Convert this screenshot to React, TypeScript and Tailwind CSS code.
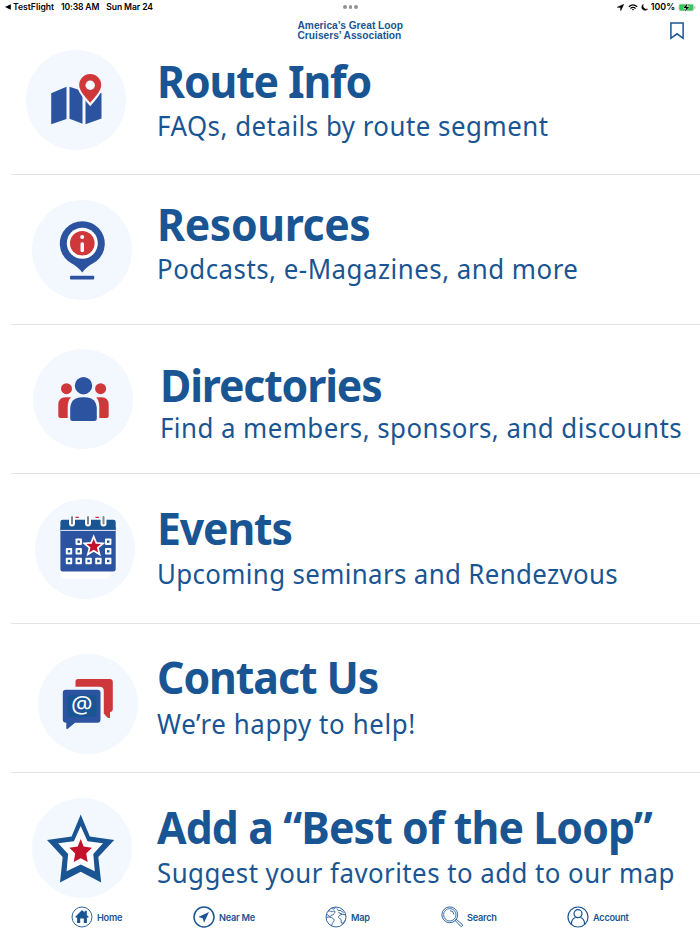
import type { ReactNode } from "react";

const BLUE = "#2c539f";
const NAVY = "#1a5593";
const RED = "#cf383b";
const CRIMSON = "#c4122d";

function RouteIcon() {
  return (
    <svg viewBox="0 0 100 100" className="size-full">
      <g fill={BLUE}>
        <path d="M25.2 43.3 40.5 36.7V69L25.2 74.3Z" />
        <path d="M43.5 36.7 56.5 41V73.7L43.5 68.7Z" />
        <path d="M59.5 42 75.5 43V68.5L59.5 74.3Z" />
      </g>
      <path
        d="M64.2 52.7C61 49 53.2 41.5 53.2 35.1a11 11 0 0 1 22 0C75.2 41.5 67.400 49 64.2 52.700Z"
        fill={RED}
        stroke="#f3f8ff"
        strokeWidth="4.500"
        paintOrder="stroke"
      />
      <circle cx="64.2" cy="35.300" r="4.700" fill="#f8fbff" />
    </svg>
  );
}

function ResourcesIcon() {
  return (
    <svg viewBox="0 0 100 100" className="size-full">
      <path d="M50.3 72.500C46 66.500 41 64.500 36 61a22.500 22.500 0 1 1 28.600 0C59.500 64.500 54.500 66.500 50.300 72.500Z" fill={BLUE} />
      <circle cx="50.300" cy="43.200" r="15.500" fill="#fff" />
      <circle cx="50.300" cy="43.200" r="12.300" fill={RED} />
      <circle cx="50.200" cy="36.900" r="2" fill="#fff" />
      <rect x="48.500" y="42.200" width="3.500" height="10" rx="1.600" fill="#fff" />
      <rect x="38" y="75.700" width="24.200" height="3.700" rx="1" fill={BLUE} />
    </svg>
  );
}

function DirectoriesIcon() {
  return (
    <svg viewBox="0 0 100 100" className="size-full">
      <g fill={RED}>
        <circle cx="33.500" cy="39.700" r="5.500" />
        <circle cx="67.600" cy="39.700" r="5.500" />
        <path d="M38 48.200H32.500Q25.300 48.200 25.300 56V67Q25.300 69 27.300 69H34.700V58Q34.700 51.500 38 48.200Z" />
        <path d="M63.200 48.200H68.500Q75.700 48.200 75.700 56V67Q75.700 69 73.700 69H66.300V58Q66.300 51.500 63.200 48.200Z" />
      </g>
      <circle cx="50.500" cy="36.700" r="8.700" fill={BLUE} />
      <path d="M37.200 60.500Q37.200 48.300 49.500 48.300H51.500Q63.800 48.300 63.800 60.500V69.700Q63.800 72 61.500 72H39.500Q37.200 72 37.200 69.700Z" fill={BLUE} />
    </svg>
  );
}

const days: [number, number][] = [
  [43.700, 42.700], [73.200, 42.700],
  [34, 52.300], [43.700, 52.300], [73.200, 52.300],
  [34, 62], [43.700, 62], [53.600, 62], [63.400, 62], [73.200, 62],
];

function EventsIcon() {
  return (
    <svg viewBox="0 0 100 100" className="size-full">
      <path d="M25.400 65H81V73H75.500Q74.500 79.700 70 79.700H28Q25.400 79.700 25.400 76Z" fill="#fff" />
      <rect x="25.400" y="27" width="55.300" height="45.400" rx="2.500" fill={BLUE} />
      <path d="M25.400 30.700V23Q25.400 20.700 27.700 20.700H78.400Q80.700 20.700 80.700 23V30.700Z" fill={NAVY} />
      <path d="M25.400 31.400H80.700" stroke="#fff" strokeWidth="0.900" />
      <path d="M40.500 18.300h3.300M60.500 18.300h3.300" stroke="#d0253b" strokeWidth="1.200" />
      {[37, 53, 68.500].map((x) => (
        <g key={x}>
          <rect x={x - 3} y="16.700" width="6" height="10.700" rx="3" fill="#fff" />
          <rect x={x - 1} y="17" width="2" height="8.500" rx="1" fill="#7c8794" />
        </g>
      ))}
      {days.map(([x, y]) => (
        <g key={`${x}-${y}`}>
          <rect x={x - 3.200} y={y - 3.200} width="6.400" height="6.400" rx="0.800" fill="#fff" />
          <rect x={x - 1.200} y={y - 1.200} width="2.400" height="2.400" fill={NAVY} />
        </g>
      ))}
      <path
        d="M58.700 39.800 60.700 44.700 66 45.100 61.900 48.500 63.200 53.600 58.700 50.800 54.200 53.600 55.500 48.500 51.400 45.100 56.700 44.700Z"
        fill={CRIMSON}
        stroke="#fff"
        strokeWidth="3.400"
        paintOrder="stroke"
      />
    </svg>
  );
}

function ContactIcon() {
  return (
    <svg viewBox="0 0 100 100" className="size-full">
      <path d="M40 25H71.800Q74.800 25 74.800 28V55.500Q74.800 57.600 72 58.200V64L69.500 63.700 65.800 59.500V37Q65.800 32.700 61.500 32.700H37.500V27.500Q37.500 25 40 25Z" fill={RED} />
      <path d="M27.800 35.700H59.500Q62.500 35.700 62.500 38.700V65.700Q62.500 68.700 59.500 68.700H37L29.500 75Q28.300 75.500 28.300 74V68.700Q24.800 68.700 24.800 65.700V38.700Q24.800 35.700 27.800 35.700Z" fill={BLUE} />
      <rect x="29.500" y="41" width="29" height="22" rx="3" fill={NAVY} />
      <text x="43.800" y="59.300" textAnchor="middle" fill="#fff" className="font-['Noto_Sans'] text-[24px]">@</text>
    </svg>
  );
}

function StarIcon() {
  return (
    <svg viewBox="0 0 100 100" className="size-full">
      <path d="M48.700 16.500 57.800 38.500 82.200 42 66.300 59 69.200 84.500 48.700 73.700 28 84.500 30.700 59 15 42 39.600 38.500Z" fill={NAVY} />
      <path d="M48.700 28 55.500 43.300 71 45.300 61.300 55.900 62.800 73.300 48.700 66.500 34.600 73.300 36.100 55.900 26.200 45.300 41.900 43.300Z" fill="#fff" />
      <path d="M48.700 41 51.600 48.500 60 49.700 54.200 55.600 55.700 64 48.700 60.200 41.700 64 43.200 55.600 37.300 49.700 45.700 48.500Z" fill={CRIMSON} />
    </svg>
  );
}

interface Entry {
  title: string;
  subtitle: string;
  icon: ReactNode;
  row: string;
  disc: string;
  text: string;
  titleTracking: string;
  subtitleStyle: string;
}

const entries: Entry[] = [
  {
    title: "Route Info", subtitle: "FAQs, details by route segment", icon: <RouteIcon />,
    row: "h-[133px]", disc: "ml-[25.500px] mt-2", text: "pl-[156.800px] pt-4",
    titleTracking: "tracking-[-1.200px]", subtitleStyle: "mt-2 tracking-[0.530px]",
  },
  {
    title: "Resources", subtitle: "Podcasts, e-Magazines, and more", icon: <ResourcesIcon />,
    row: "h-[150px]", disc: "ml-8 mt-[24.500px]", text: "pl-[156.800px] pt-[26px]",
    titleTracking: "tracking-[-0.400px]", subtitleStyle: "mt-2 tracking-[0.520px]",
  },
  {
    title: "Directories", subtitle: "Find a members, sponsors, and discounts", icon: <DirectoriesIcon />,
    row: "h-[149px]", disc: "ml-[32.500px] mt-6", text: "pl-[159.500px] pt-[37px]",
    titleTracking: "tracking-[-1.200px]", subtitleStyle: "mt-1.5 tracking-[0.480px]",
  },
  {
    title: "Events", subtitle: "Upcoming seminars and Rendezvous", icon: <EventsIcon />,
    row: "h-[150px]", disc: "ml-[35.300px] mt-[25px]", text: "pl-[156.800px] pt-[31px]",
    titleTracking: "tracking-[-1.200px]", subtitleStyle: "mt-[9px] tracking-[0.380px]",
  },
  {
    title: "Contact Us", subtitle: "We’re happy to help!", icon: <ContactIcon />,
    row: "h-[149px]", disc: "ml-[37.500px] mt-[30px]", text: "pl-[156.800px] pt-[30px]",
    titleTracking: "tracking-[-1.100px]", subtitleStyle: "mt-2.5 tracking-[0.650px]",
  },
  {
    title: "Add a “Best of the Loop”", subtitle: "Suggest your favorites to add to our map", icon: <StarIcon />,
    row: "h-[127px]", disc: "ml-[32.300px] mt-[25px]", text: "pl-[156.800px] pt-[31px]",
    titleTracking: "tracking-[-0.920px]", subtitleStyle: "mt-[9px] tracking-[0.480px]",
  },
];

function EntryRow({ entry, last }: { entry: Entry; last: boolean }) {
  return (
    <li className={`relative grid shrink-0 ${entry.row}`}>
      <div className={`col-start-1 row-start-1 size-[100px] rounded-full bg-[#f3f8ff] ${entry.disc}`}>{entry.icon}</div>
      <div className={`col-start-1 row-start-1 flex flex-col items-start whitespace-nowrap font-['Noto_Sans',sans-serif] text-[#1a5593] ${entry.text}`}>
        <h2 className={`origin-left translate-y-[0.300px] scale-x-[0.950] text-[45px] leading-[45px] font-bold ${entry.titleTracking}`}>{entry.title}</h2>
        <p className={`origin-left translate-y-[0.500px] scale-x-[0.957] text-[27px] leading-[27px] ${entry.subtitleStyle}`}>{entry.subtitle}</p>
      </div>
      {!last && <div className="absolute right-0 bottom-0 left-[11px] h-px bg-[#e3e3e5]" />}
    </li>
  );
}

function StatusBar() {
  return (
    <div className="flex h-3.5 items-center justify-between pr-1 pl-[5px] text-[8.600px] leading-none font-semibold text-black">
      <div className="flex w-[300px] items-center">
        <svg viewBox="0 0 6 6" className="mr-[2px] size-1.5"><path d="M0 3 5.800 0.300V5.700Z" /></svg>
        <span>TestFlight</span>
        <span className="ml-[7px] tracking-[-0.150px]">10:38 AM</span>
        <span className="ml-[7px] tracking-[-0.100px]">Sun Mar 24</span>
      </div>
      <div className="flex gap-[2px]">
        <i className="size-[3.500px] rounded-full bg-[#929292]" />
        <i className="size-[3.500px] rounded-full bg-[#929292]" />
        <i className="size-[3.500px] rounded-full bg-[#929292]" />
      </div>
      <div className="flex w-[300px] items-center justify-end">
        <svg viewBox="0 0 8 8" className="mr-1 size-[7px]"><path d="M7.800 0.200 0.200 3.700 3.900 4.100 4.300 7.800Z" stroke="#000" strokeWidth="0.500" /></svg>
        <svg viewBox="0 0 20 15" className="mr-[3px] h-[7px] w-[10px]" fill="none" stroke="#000" strokeWidth="2.600">
          <path d="M1 6Q10-2.500 19 6M4.500 9.500Q10 4.500 15.500 9.500" />
          <path d="M7.500 11.500Q10 9.500 12.500 11.500L10 14Z" fill="#000" stroke="none" />
        </svg>
        <svg viewBox="0 0 8 8" className="mr-[3px] size-[7px]"><path d="M2.600 0.400A3.700 3.700 0 1 0 7.500 5.800 4 4 0 0 1 2.600 0.400Z" stroke="#000" strokeWidth="0.600" /></svg>
        <span className="text-[8.800px]">100%</span>
        <svg viewBox="0 0 18 9" className="ml-[3px] h-[9px] w-[18px]">
          <rect x="0.500" y="0.700" width="15.500" height="7.600" rx="2.300" fill="#c9cfc9" />
          <rect x="1.400" y="1.600" width="13.700" height="5.800" rx="1.400" fill="#34c759" />
          <path d="M16.800 3.300v2.400" stroke="#aaa" />
          <path d="M9.300 0.500 5.300 5H8L7 8.500 11.200 4H8.500Z" stroke="#fff" strokeWidth="0.900" paintOrder="stroke" />
        </svg>
      </div>
    </div>
  );
}

function Header() {
  return (
    <header className="flex h-7 items-start justify-between pr-4 pl-[30.500px]">
      <span className="w-0" />
      <h1 className="pt-[7px] text-left font-['Liberation_Sans',sans-serif] text-[10.200px] leading-[10px] font-bold text-[#1a5593]">
        America’s Great Loop
        <br />
        Cruisers’ Association
      </h1>
      <svg viewBox="0 0 14 18" className="mt-2 h-[18px] w-3.5" fill="none" stroke={NAVY} strokeWidth="1.500">
        <path d="M0.900 0.900H13.100V16.300L7 11.800 0.900 16.300Z" />
      </svg>
    </header>
  );
}

const tabs = [
  {
    label: "Home", width: "w-[122px]",
    icon: (
      <>
        <circle cx="11" cy="11" r="10" strokeWidth="0.900" />
        <path fill={NAVY} stroke="none" d="M4.300 10.800 11 4l2.600 2.600V4.800h2.200v4.100l2 2-1 1-.9-.8V17h-3.100v-4.500H9.200V17H6.100v-5.900l-.9.800Z" />
      </>
    ),
  },
  {
    label: "Near Me", width: "w-[132px]",
    icon: (
      <>
        <circle cx="11" cy="11" r="10" strokeWidth="1.500" />
        <path fill={NAVY} stroke="none" d="M16 6 5.300 11 9.800 12.200 11 16.700Z" />
      </>
    ),
  },
  {
    label: "Map", width: "w-[116px]",
    icon: (
      <>
        <circle cx="11" cy="11" r="10" strokeWidth="0.900" />
        <g strokeWidth="0.900">
          <path d="M3.300 5C5 4.600 6 6 7.500 5.500S10 4.500 10 6 8.500 7.300 8.300 8.500 6 8.600 5.700 10 3.500 9.500 2 8.500M1.500 11.500C3.500 10.500 6 11 8 12.500S9 15 8 16.500 7 18 6.500 20M6.500 2.300C8 3.300 9.500 3.300 10.500 1.500M20.500 9C18.500 8 16.500 8 14.500 9.500S14 12.500 15.500 13 15.500 15.500 16.500 17 18.500 15.500 20 14.500M12 2.500C12.500 4.500 13.500 5 15 4.500S16.500 6 18.500 6.500M13.500 6.500 17 8" />
        </g>
      </>
    ),
  },
  {
    label: "Search", width: "w-[126px]",
    icon: (
      <>
        <circle cx="8.800" cy="8.800" r="7.900" strokeWidth="0.900" />
        <circle cx="8.800" cy="8.800" r="6.200" strokeWidth="0.800" />
        <path strokeWidth="0.900" d="M9 4.600A4.300 4.300 0 0 1 13 8.500M14.200 14.500 19.600 20.300Q20.600 21 21.300 20T21 18.200L15.200 13.300Z" />
      </>
    ),
  },
  {
    label: "Account", width: "w-[90px]",
    icon: (
      <>
        <circle cx="11" cy="11" r="10" strokeWidth="1.200" />
        <circle cx="11" cy="7.700" r="4" strokeWidth="1.200" />
        <path strokeWidth="1.200" d="M4.500 18.500V17.300A6.300 6.300 0 0 1 8.500 11.500M13.500 11.500A6.300 6.300 0 0 1 17.500 17.300V18.500" />
      </>
    ),
  },
];

export default function App() {
  return (
    <main className="flex h-[934px] w-[700px] flex-col overflow-hidden bg-white font-['Inter',sans-serif]">
      <StatusBar />
      <Header />
      <ul className="flex flex-col">
        {entries.map((entry, i) => (
          <EntryRow key={entry.title} entry={entry} last={i === entries.length - 1} />
        ))}
      </ul>
      <nav className="flex h-[34px] items-center pl-[71px] text-[9.200px] font-semibold text-[#1a5593]">
        {tabs.map((tab) => (
          <a key={tab.label} className={`flex shrink-0 items-center gap-1 ${tab.width}`}>
            <svg viewBox="0 0 22 22" className="size-[22px]" fill="none" stroke={NAVY}>{tab.icon}</svg>
            <span className="pt-px tracking-[-0.250px]">{tab.label}</span>
          </a>
        ))}
      </nav>
    </main>
  );
}
